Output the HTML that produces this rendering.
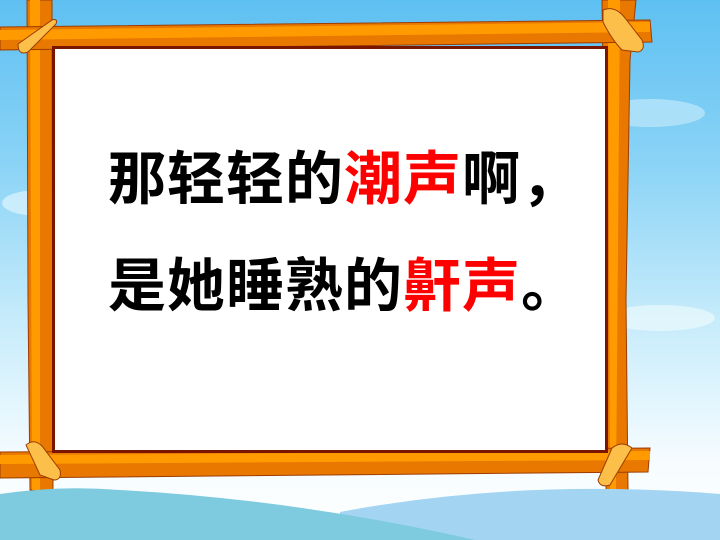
<!DOCTYPE html>
<html><head><meta charset="utf-8"><style>
html,body{margin:0;padding:0;width:720px;height:540px;overflow:hidden}
body{position:relative;background:linear-gradient(#5ec0f2 0%,#8ad3f6 30%,#c8ecfb 60%,#f5fcff 85%,#fff 100%)}
svg{position:absolute;left:0;top:0}
.t{position:absolute;left:108px;font-family:"Liberation Sans","Noto Sans CJK SC",sans-serif;font-weight:700;font-size:58px;line-height:70px;color:#000;white-space:nowrap;letter-spacing:1px}
.r{color:#ff0000}
</style></head><body>
<svg width="720" height="540" viewBox="0 0 720 540">
<ellipse cx="650" cy="113" rx="55" ry="14" fill="#bfe8fb" opacity=".7"/>
<ellipse cx="40" cy="203" rx="38" ry="13" fill="#d6f1fc" opacity=".8"/>
<ellipse cx="660" cy="318" rx="55" ry="13" fill="#e6f7fd" opacity=".8"/>
<!-- posts -->
<path d="M27 0 L52 0 L53 490 L30 490 L28 300 Z" fill="#e87800" stroke="#9c3c00" stroke-width="1"/>
<path d="M30 0 L40 0 L40 490 L32 490 Z" fill="#ff9b00"/>
<path d="M602 0 L636 0 L630 60 L626 300 L628 490 L606 490 L606 300 Z" fill="#e87800" stroke="#9c3c00" stroke-width="1"/>
<path d="M608 0 L620 0 L616 490 L610 490 Z" fill="#ff9b00"/>
<!-- top beam -->
<path d="M0 27 L650 20 L652 42 L0 50 Z" fill="#e87800" stroke="#9c3c00" stroke-width="1"/>
<path d="M0 30 L650 22 L650 32 L0 40 Z" fill="#ff9b00"/>
<!-- bottom beam -->
<path d="M0 452 L650 448 L648 472 L0 478 Z" fill="#e87800" stroke="#9c3c00" stroke-width="1"/>
<path d="M0 455 L650 451 L650 460 L0 464 Z" fill="#ff9b00"/>
<!-- panel -->
<rect x="52" y="46" width="556" height="407" fill="#7a1500"/>
<rect x="55" y="49" width="550" height="401" fill="#fff"/>
<!-- ropes -->
<path d="M18 44 L52 20 Q58 18 56 24 L28 52 Q18 56 18 44 Z" fill="#fcc04a" stroke="#9c3c00" stroke-width="1"/>
<path d="M603 10 Q615 5 625 18 L642 40 Q646 50 638 52 L622 50 Q612 40 603 22 Z" fill="#fcc04a" stroke="#9c3c00" stroke-width="1"/>
<path d="M26 445 Q34 438 42 446 L60 470 Q62 480 54 480 L40 475 Z" fill="#fcc04a" stroke="#9c3c00" stroke-width="1"/>
<path d="M612 448 Q622 440 632 448 L610 485 Q600 488 598 480 Z" fill="#fcc04a" stroke="#9c3c00" stroke-width="1"/>
<!-- hills -->
<path d="M340 512 Q520 478 720 494 L720 540 L340 540 Z" fill="#a3d5f2"/>
<path d="M0 494 Q60 485 120 490 Q300 500 475 540 L0 540 Z" fill="#7ecadf"/>
</svg>
<div class="t" style="top:145px">那轻轻的<span class="r">潮声</span>啊，</div>
<div class="t" style="top:252px">是她睡熟的<span class="r">鼾声</span>。</div>
</body></html>
